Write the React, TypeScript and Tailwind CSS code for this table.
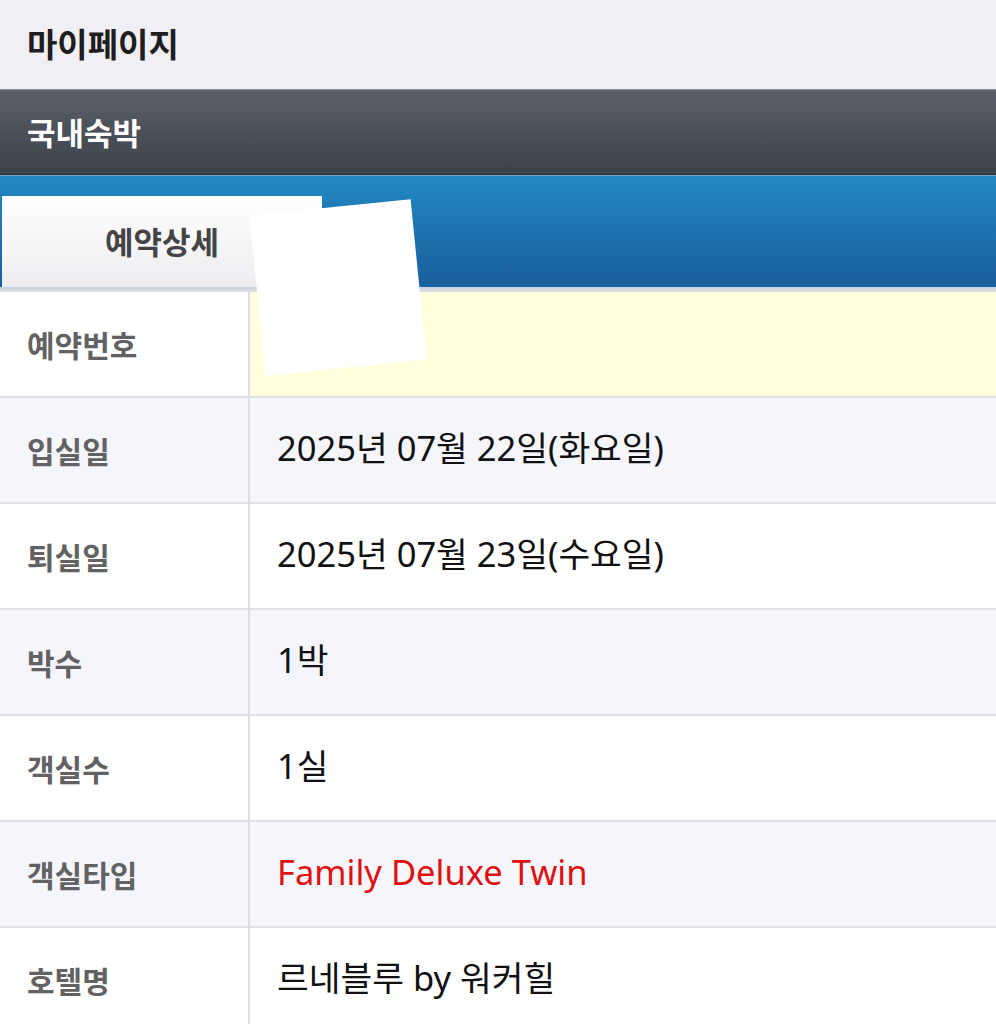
import React from "react";

const rows: { label: string; value: string; bg: string; valueBg?: string; red?: boolean }[] = [
  { label: "예약번호", value: "", bg: "bg-white", valueBg: "bg-[#ffffdd]" },
  { label: "입실일", value: "2025년 07월 22일(화요일)", bg: "bg-[#f5f6fc]" },
  { label: "퇴실일", value: "2025년 07월 23일(수요일)", bg: "bg-white" },
  { label: "박수", value: "1박", bg: "bg-[#f5f6fc]" },
  { label: "객실수", value: "1실", bg: "bg-white" },
  { label: "객실타입", value: "Family Deluxe Twin", bg: "bg-[#f5f6fc]", red: true },
  { label: "호텔명", value: "르네블루 by 워커힐", bg: "bg-white" },
];

export default function App() {
  return (
    <div
      className="relative w-[996px] h-[1024px] overflow-hidden bg-white"
      style={{ fontFamily: '"Noto Sans CJK KR", "Noto Sans", sans-serif' }}
    >
      {/* Header */}
      <div className="h-[89px] bg-[#efeff5] flex items-center pl-[27px] pb-[2px]">
        <span className="text-[33px] font-bold text-[#1e1e1e]">마이페이지</span>
      </div>
      {/* Dark bar */}
      <div className="h-[86px] border-t border-[#8a8e95] border-b border-b-[#2f3338] bg-gradient-to-b from-[#5b606a] to-[#3c4248] flex items-center pl-[27px]">
        <span className="text-[31px] font-bold text-white">국내숙박</span>
      </div>
      {/* Blue bar with tab */}
      <div className="h-[112px] border-t border-[#6ea7d2] bg-gradient-to-b from-[#2388c2] to-[#1a5e9b] flex items-end">
        <div className="ml-[2px] w-[320px] h-[91px] bg-gradient-to-b from-white to-[#edecf0] flex items-center justify-center">
          <span className="text-[31px] font-bold text-[#444]">예약상세</span>
        </div>
      </div>
      <div className="h-[2px] bg-[#c9d5e4]" />
      <div className="h-[3px] bg-[#dadadf]" />
      {/* Table */}
      <div className="flex flex-col">
        {rows.map((r) => (
          <div key={r.label} className={`flex h-[106px] border-b-2 border-[#e0e0e5] ${r.bg}`}>
            <div className="w-[250px] shrink-0 border-r-2 border-[#dedee3] flex items-center pl-[27px]">
              <span className="text-[30px] font-bold text-[#626262]">{r.label}</span>
            </div>
            <div className={`flex-1 flex items-center pl-[27px] pb-[4px] ${r.valueBg ?? ""}`}>
              <span
                className={`text-[34.5px] ${r.red ? "text-[#e01010]" : "text-[#111]"}`}
                style={{ fontFamily: '"Noto Sans", "Noto Sans CJK KR", sans-serif' }}
              >
                {r.value}
              </span>
            </div>
          </div>
        ))}
      </div>
      {/* White rotated overlay */}
      <div className="absolute left-[257px] top-[207px] w-[162px] h-[161px] bg-white rotate-[-5.7deg]" />
    </div>
  );
}
